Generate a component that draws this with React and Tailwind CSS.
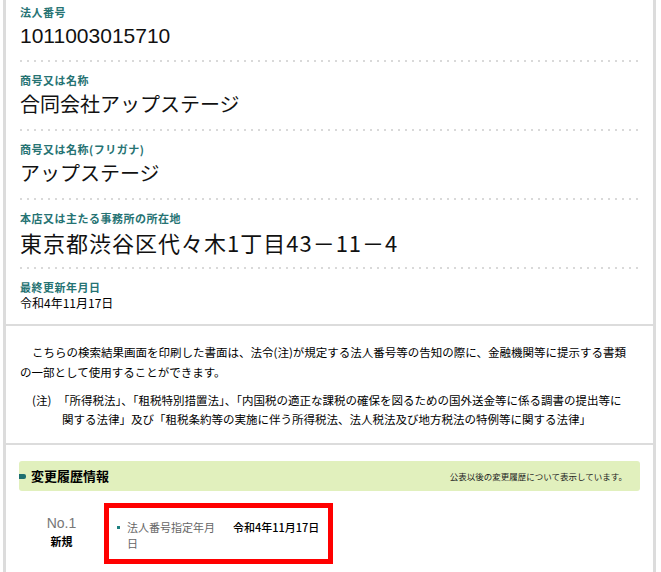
import React from 'react';

const jp = { fontFamily: '"Noto Sans CJK JP", "Noto Sans", sans-serif' };

const rows = [
  { label: '法人番号', value: '1011003015710', latin: true },
  { label: '商号又は名称', value: '合同会社アップステージ' },
  { label: '商号又は名称(フリガナ)', value: 'アップステージ' },
  { label: '本店又は主たる事務所の所在地', value: '東京都渋谷区代々木1丁目43－11－4', big: true },
];

const Dots = () => (
  <div className="h-[2px] bg-[linear-gradient(to_right,#d9d9d9_2px,transparent_2px)] bg-[length:7px_2px]" />
);

const Label = ({ children }) => (
  <div className="text-[11px] leading-[16px] font-bold text-[#267373] tracking-[0.5px]">{children}</div>
);

const InfoRow = ({ row, first }) => (
  <div>
    <div className={first ? 'pt-[4px] pb-[8px]' : 'pt-[10px] pb-[9px]'}>
      <Label>{row.label}</Label>
      <div
        className={
          row.big
            ? 'text-[22px] leading-[32px] tracking-[1px] text-[#111]'
            : 'text-[20px] leading-[32px] text-[#111]'
        }
        style={row.latin ? { fontFamily: '"Liberation Sans", Arial, sans-serif', fontSize: 21 } : undefined}
      >
        {row.value}
      </div>
    </div>
    <Dots />
  </div>
);

export default function App() {
  return (
    <div className="min-h-screen bg-white" style={jp}>
      <div className="ml-[3px] w-[653px] border-x-[3px] border-[#dcdcdc]">
        {/* basic info */}
        <div className="px-[14px] pb-[13px] border-b-2 border-[#dcdcdc]">
          {rows.map((r, i) => (
            <InfoRow key={r.label} row={r} first={i === 0} />
          ))}
          <div className="pt-[10px]">
            <Label>最終更新年月日</Label>
            <div className="text-[12px] leading-[16px] text-black">令和4年11月17日</div>
          </div>
        </div>

        {/* notice */}
        <div className="px-[14px] pt-[16px] pb-[14px] border-b-2 border-[#dcdcdc] text-black text-[11.5px]">
          <p className="leading-[20px] whitespace-nowrap indent-[12px]">
            こちらの検索結果画面を印刷した書面は、法令(注)が規定する法人番号等の告知の際に、金融機関等に提示する書類
            <br />
            の一部として使用することができます。
          </p>
          <div className="mt-[9px] flex leading-[19px] pl-[12px]">
            <div className="w-[30px] shrink-0">(注)</div>
            <div className="whitespace-nowrap">
              <div className="-ml-[4px]">
                「所得税法」、「租税特別措置法」、「内国税の適正な課税の確保を図るための国外送金等に係る調書の提出等に
              </div>
              <div>関する法律」及び「租税条約等の実施に伴う所得税法、法人税法及び地方税法の特例等に関する法律」</div>
            </div>
          </div>
        </div>

        {/* history */}
        <div className="px-[13px] pt-[16px] pb-[20px]">
          <div className="h-[30px] rounded-[3px] bg-[#e1f0bd] flex items-center justify-between pr-[13px]">
            <div className="flex items-center">
              <span className="w-[7px] h-[5px] rounded-r-[2px] bg-[#1d6f6f]" />
              <span className="ml-[5px] text-[13px] font-bold text-black">変更履歴情報</span>
            </div>
            <span className="text-[8.5px] text-[#222]">公表以後の変更履歴について表示しています。</span>
          </div>

          <div className="mt-[12px] flex">
            <div className="w-[85px] pt-[12px] flex flex-col items-center">
              <div
                className="text-[14px] leading-[16px] text-[#777]"
                style={{ fontFamily: '"Liberation Sans", Arial, sans-serif' }}
              >
                No.1
              </div>
              <div className="mt-[2px] text-[11px] leading-[16px] font-bold text-black">新規</div>
            </div>
            <div className="w-[229px] border-[5px] border-[#ff0000] pt-[11px] pb-[8px] pl-[8px]">
              <div className="flex">
                <span className="mt-[7px] w-[3px] h-[3px] bg-[#1d8080] shrink-0" />
                <div className="ml-[7px] w-[96px] text-[11px] leading-[16px] text-[#666]">法人番号指定年月日</div>
                <div className="ml-[10px] text-[11px] leading-[16px] font-medium text-black whitespace-nowrap">
                  令和4年11月17日
                </div>
              </div>
            </div>
          </div>
        </div>
      </div>
    </div>
  );
}
